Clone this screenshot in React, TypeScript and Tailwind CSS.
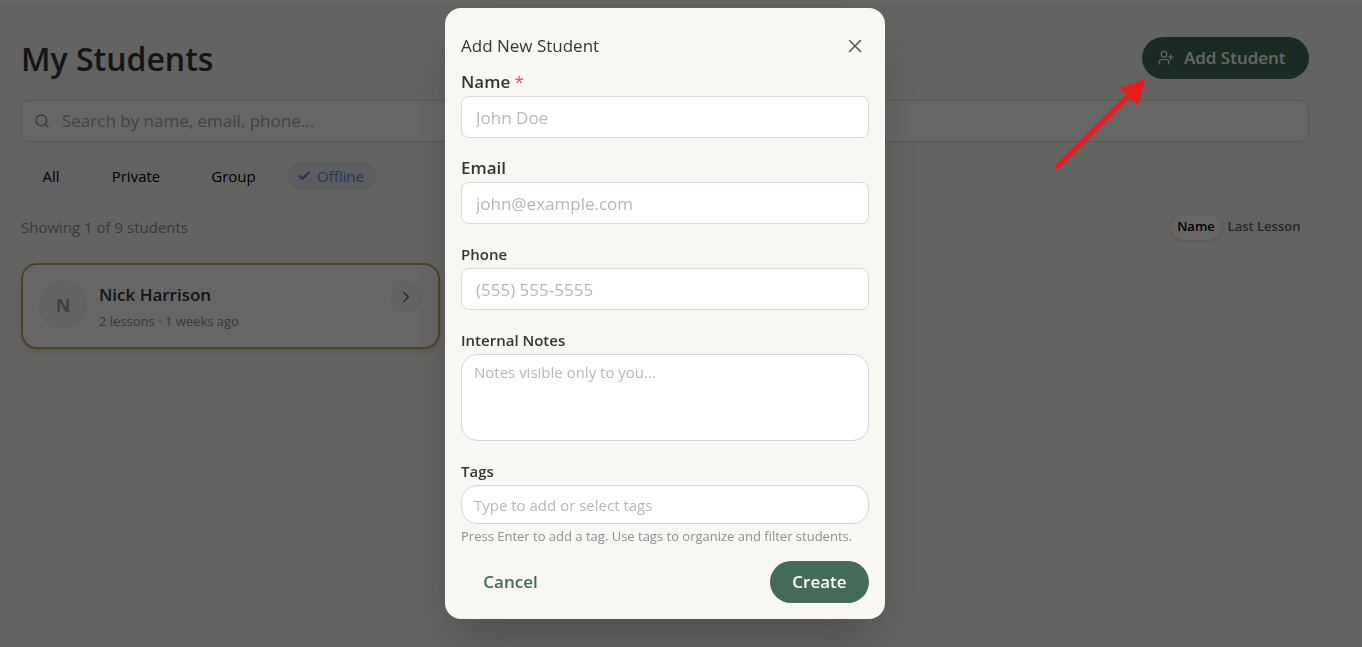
import { Check, ChevronRight, Search, X } from 'lucide-react';

const filters = [
	{ label: 'All', width: 'w-[60px]' },
	{ label: 'Private', width: 'w-[88px]' },
	{ label: 'Group', width: 'w-[85px]' },
];

const fields = [
	{ id: 'name', label: 'Name', type: 'text', placeholder: 'John Doe', required: true, labelClass: 'text-[17px]' },
	{ id: 'email', label: 'Email', type: 'email', placeholder: 'john@example.com', required: false, labelClass: 'text-[17px]' },
	{ id: 'phone', label: 'Phone', type: 'tel', placeholder: '(555) 555-5555', required: false, labelClass: 'text-[15px]' },
];

function UserPlusIcon() {
	return (
		<svg className="size-4" viewBox="0 0 16 16" fill="none" stroke="currentColor" strokeWidth="1.2" strokeLinecap="round" strokeLinejoin="round" aria-hidden="true">
			<circle cx="6" cy="4.2" r="2.9" />
			<path d="M1.200 14v-1.500A3 3 0 0 1 4.200 9.500h3.600a3 3 0 0 1 3 3V14" />
			<path d="M12.600 4.500v5M10.200 7h4.800" />
		</svg>
	);
}

function PointerArrow() {
	return (
		<svg className="pointer-events-none absolute top-full right-full z-50 -mr-1 h-[92px] w-[92px]" viewBox="0 0 92 92" fill="#e81c1c" aria-hidden="true">
			<path d="M91.500 0 65 8.500l7.500 7L.200 87.500l3 3.500L76 19l8 7.500z" />
		</svg>
	);
}

function StudentsPage() {
	return (
		<main>
			<div className="h-1 bg-white shadow-xs" />
			<div className="pt-[33px] pr-[53px] pl-[21px]">
				<header className="flex items-center justify-between">
					<h1 className="pt-0.5 text-[32px] leading-10 font-semibold text-[#333538]">My Students</h1>
					<div className="relative">
						<button type="button" className="flex h-[42px] w-[167px] items-center gap-2.5 rounded-full bg-[#436b57] pl-4 text-[17px] font-semibold text-white">
							<UserPlusIcon />
							Add Student
						</button>
						<PointerArrow />
					</div>
				</header>

				<div className="mt-[21px] flex h-[42px] items-center gap-3 rounded-lg border border-[#d2dfd8] bg-white px-3">
					<Search className="size-4 shrink-0 text-[#8b8f96]" strokeWidth={2} />
					<input type="search" aria-label="Search students" placeholder="Search by name, email, phone..." className="w-full bg-transparent text-[17px] outline-none placeholder:text-[#a5a8af]" />
				</div>

				<div className="mt-5 flex gap-[11px] text-[15px]">
					{filters.map((filter) => (
						<button key={filter.label} type="button" className={`h-7 rounded-full bg-[#f4f4f5] text-black ${filter.width}`}>{filter.label}</button>
					))}
					<button type="button" className="flex h-7 w-[90px] items-center gap-1.5 rounded-full bg-[#e4e9f1] pl-2.5 text-[#6488e0]">
						<Check className="size-[14px]" strokeWidth={4} />
						Offline
					</button>
				</div>

				<div className="mt-5 flex items-center justify-between">
					<p className="text-[15px] text-[#8b8f96]">Showing 1 of 9 students</p>
					<div className="flex h-[34px] items-center rounded-full bg-[#f4f4f5] px-0.5 text-[13px] font-semibold">
						<button type="button" className="h-[25px] w-[50px] rounded-full bg-white text-black shadow">Name</button>
						<button type="button" className="h-[25px] w-[86px] text-[#63676e]">Last Lesson</button>
					</div>
				</div>

				<ul className="mt-[19px] grid grid-cols-3 gap-4">
					<li className="flex h-[86px] rounded-2xl border-2 border-[#c9a353] bg-white p-4 shadow-md">
						<span className="flex size-12 shrink-0 items-center justify-center rounded-full bg-[#f7f7f8] text-lg font-bold text-[#9ca3af]">N</span>
						<div className="ml-3">
							<h2 className="text-[17px] leading-7 font-semibold text-[#333538]">Nick Harrison</h2>
							<p className="text-[13px] leading-6 text-[#8b8f96]">2 lessons · 1 weeks ago</p>
						</div>
						<button type="button" aria-label="Open student" className="ml-auto flex size-8 items-center justify-center rounded-full bg-[#f8f8f8] text-[#63676e]">
							<ChevronRight className="size-[18px]" strokeWidth={2} />
						</button>
					</li>
				</ul>
			</div>
		</main>
	);
}

function AddStudentDialog() {
	return (
		<div className="fixed inset-0 z-40 flex items-start justify-center bg-black/60 pt-2 pr-8">
			<form role="dialog" aria-labelledby="dialog-title" className="w-[440px] rounded-2xl bg-[#f8f7f2] p-4 shadow-2xl">
				<div className="mb-1 flex h-11 items-center justify-between">
					<h2 id="dialog-title" className="text-[17px] text-[#333538]">Add New Student</h2>
					<button type="button" aria-label="Close" className="mr-[3px] text-[#4b4f55]">
						<X className="size-[22px]" strokeWidth={1.5} />
					</button>
				</div>

				<div className="flex flex-col gap-5">
					{fields.map((field) => (
						<div key={field.id}>
							<label htmlFor={field.id} className={`mb-1 block leading-5 font-semibold text-[#333538] ${field.labelClass}`}>
								{field.label}
								{field.required && <span className="font-normal text-[#e05252]"> *</span>}
							</label>
							<input id={field.id} type={field.type} placeholder={field.placeholder} className="h-[42px] w-full rounded-lg border border-[#d2dfd8] bg-white px-3.5 text-[17px] outline-none placeholder:text-[#b5b8c0]" />
						</div>
					))}
					<div>
						<label htmlFor="notes" className="mb-1 block text-[15px] leading-5 font-semibold text-[#333538]">Internal Notes</label>
						<textarea id="notes" placeholder="Notes visible only to you..." className="block h-[87px] w-full resize-none rounded-2xl border border-[#d1d5db] bg-white px-3 py-1.5 text-[15px] leading-[22px] outline-none placeholder:text-[#b5b8c0]" />
					</div>
					<div>
						<label htmlFor="tags" className="mb-1 block text-[15px] leading-5 font-semibold text-[#333538]">Tags</label>
						<input id="tags" type="text" placeholder="Type to add or select tags" className="block h-[39px] w-full rounded-2xl border border-[#d1d5db] bg-white px-3 text-[15px] outline-none placeholder:text-[#b5b8c0]" />
						<p className="mt-1 text-[13px] leading-[17px] whitespace-nowrap text-[#8b8f96]">Press Enter to add a tag. Use tags to organize and filter students.</p>
					</div>
				</div>

				<div className="mt-4 flex justify-between text-[17px] font-semibold">
					<button type="button" className="h-[42px] w-[99px] rounded-full text-[#436b57]">Cancel</button>
					<button type="submit" className="h-[42px] w-[99px] rounded-full bg-[#436b57] text-white">Create</button>
				</div>
			</form>
		</div>
	);
}

export default function App() {
	return (
		<div className="min-h-screen bg-[#f8f7f2] font-['Open_Sans','Noto_Sans',sans-serif]">
			<StudentsPage />
			<AddStudentDialog />
		</div>
	);
}
